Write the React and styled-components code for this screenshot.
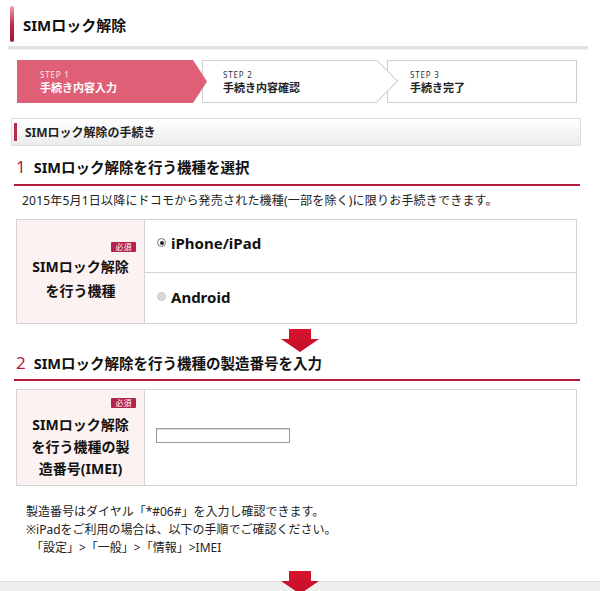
import React from "react";
import styled, { createGlobalStyle } from "styled-components";

const Global = createGlobalStyle`
  * { box-sizing: border-box; }
  html, body { margin: 0; padding: 0; background: #fff; }
  body {
    font-family: "Noto Sans", "Noto Sans CJK JP", sans-serif;
    color: #222;
  }
`;

const Page = styled.div`
  width: 600px;
  height: 591px;
  overflow: hidden;
  position: relative;
  background: #fff;
`;

const Header = styled.div`
  margin: 0 12px 0 8px;
  height: 49px;
  display: flex;
  align-items: flex-start;
  border-bottom: 3px solid #e2e2e2;
  box-shadow: 0 1px 0 #f2f2f2;
`;

const HeaderBar = styled.div`
  width: 4px;
  height: 36px;
  margin: 6px 0 0 2px;
  border-radius: 2px;
  background: linear-gradient(#e9a0ad, #c2214a 55%, #a3163a);
`;

const HeaderTitle = styled.h1`
  margin: 15px 0 0 9px;
  font-size: 15px;
  line-height: 20px;
  font-weight: 700;
  color: #111;
`;

const Steps = styled.div`
  display: flex;
  margin: 11px 23px 0 17px;
  height: 43px;
`;

const StepBase = styled.div`
  position: relative;
  height: 43px;
  display: flex;
  flex-direction: column;
  justify-content: center;
  padding-top: 1px;
`;

const StepActive = styled(StepBase)`
  width: 190px;
  flex: none;
  padding-left: 23px;
  background: #df5f76;
  color: #fff;
  z-index: 2;
  clip-path: polygon(0 0, calc(100% - 14px) 0, 100% 50%, calc(100% - 14px) 100%, 0 100%);
`;

const StepMid = styled(StepBase)`
  width: 175px;
  flex: none;
  margin-left: -5px;
  padding-left: 20px;
  border: 1px solid #cfcfcf;
  border-right: none;
  background: #fff;
  z-index: 1;
  &::after {
    content: "";
    position: absolute;
    right: -15px;
    top: 5px;
    width: 29px;
    height: 29px;
    background: #fff;
    border-top: 1px solid #cfcfcf;
    border-right: 1px solid #cfcfcf;
    transform: rotate(45deg);
  }
`;

const StepLast = styled(StepBase)`
  flex: 1;
  margin-left: 10px;
  padding-left: 22px;
  border: 1px solid #cfcfcf;
  background: #fff;
`;

const StepNum = styled.div`
  font-size: 8px;
  line-height: 10px;
  letter-spacing: 0.8px;
  color: ${(p) => (p.$active ? "#fde6ea" : "#333")};
`;

const StepName = styled.div`
  font-size: 11px;
  line-height: 15px;
  font-weight: 700;
  color: ${(p) => (p.$active ? "#fff" : "#222")};
`;

const SectionHead = styled.div`
  margin: 15px 19px 0 11px;
  height: 28px;
  border: 1px solid #dcdcdc;
  border-radius: 2px;
  background: linear-gradient(#ffffff, #ececec);
  display: flex;
  align-items: center;
`;

const SectionBar = styled.div`
  width: 3px;
  height: 18px;
  margin-left: 2px;
  background: #b72c48;
`;

const SectionTitle = styled.div`
  margin-left: 8px;
  font-size: 12px;
  font-weight: 700;
  color: #222;
`;

const StepHeading = styled.h2`
  margin: 0 20px 0 14px;
  padding: ${(p) => p.$pt}px 0 ${(p) => p.$pb}px 2px;
  border-bottom: 2px solid #b3193d;
  display: flex;
  align-items: baseline;
  font-size: 14.5px;
  line-height: 22px;
  font-weight: 700;
  color: #111;
`;

const HeadNum = styled.span`
  font-weight: 400;
  font-size: 17px;
  color: #b3193d;
  margin-right: 8px;
`;

const Desc = styled.p`
  margin: 6px 0 0 22px;
  font-size: 12px;
  line-height: 18px;
  letter-spacing: 0.2px;
  color: #222;
`;

const FormTable = styled.div`
  margin: ${(p) => p.$mt}px 23px 0 16px;
  display: grid;
  grid-template-columns: 128px 1fr;
  border: 1px solid #d4d4d4;
  height: ${(p) => p.$h}px;
`;

const LabelCell = styled.div`
  position: relative;
  background: #fcf2f2;
  border-right: 1px solid #d4d4d4;
  display: flex;
  flex-direction: column;
  align-items: center;
  justify-content: center;
  padding-top: ${(p) => p.$pt || 0}px;
`;

const Badge = styled.span`
  position: absolute;
  right: 8px;
  top: ${(p) => p.$top}px;
  width: 25px;
  height: 10px;
  line-height: 10px;
  font-size: 8px;
  text-align: center;
  color: #fff;
  background: #b3234c;
  border-radius: 1px;
`;

const LabelText = styled.div`
  font-size: 14px;
  line-height: ${(p) => p.$lh}px;
  font-weight: 700;
  text-align: center;
  color: #111;
`;

const Options = styled.div`
  display: grid;
  grid-template-rows: 1fr 1fr;
`;

const OptionRow = styled.label`
  display: flex;
  align-items: center;
  padding-left: 12px;
  padding-bottom: ${(p) => p.$pb || 0}px;
  border-top: ${(p) => (p.$first ? "none" : "1px solid #d4d4d4")};
  font-size: 15px;
  font-weight: 700;
  color: #111;
`;

const Radio = styled.span`
  width: 9px;
  height: 9px;
  border-radius: 50%;
  margin-right: 5px;
  border: 1px solid ${(p) => (p.$on ? "#777" : "#c8c8c8")};
  background: ${(p) => (p.$on ? "#fff" : "#d8d8d8")};
  display: flex;
  align-items: center;
  justify-content: center;
  &::after {
    content: "";
    width: 4px;
    height: 4px;
    border-radius: 50%;
    background: ${(p) => (p.$on ? "#222" : "transparent")};
  }
`;

const InputCell = styled.div`
  display: flex;
  align-items: center;
  padding: 0 0 4px 11px;
`;

const TextInput = styled.input`
  width: 134px;
  height: 15px;
  border: 1px solid #9a9a9a;
  box-shadow: inset 0 1px 1px #ddd;
  padding: 0 3px;
  font-size: 11px;
`;

const ArrowWrap = styled.div`
  display: flex;
  justify-content: center;
  margin-top: ${(p) => p.$mt}px;
  height: 23px;
`;

const Notes = styled.div`
  margin: 17px 0 0 26px;
  font-size: 12px;
  line-height: 18px;
  color: #222;
`;

const Indent = styled.div`
  padding-left: 5px;
`;

const Footer = styled.div`
  position: absolute;
  left: 0;
  right: 0;
  top: 581px;
  height: 10px;
  background: #efefef;
  border-top: 1px solid #e0e0e0;
`;

const FooterArrow = styled.div`
  position: absolute;
  left: 281px;
  top: 571px;
  z-index: 3;
`;

const DownArrow = () => (
  <svg width="38" height="23" viewBox="0 0 38 23">
    <defs>
      <linearGradient id="ag" x1="0" y1="0" x2="0" y2="1">
        <stop offset="0" stopColor="#d8142e" />
        <stop offset="1" stopColor="#c20e28" />
      </linearGradient>
    </defs>
    <polygon points="8,0 30,0 30,10 38,10 19,23 0,10 8,10" fill="url(#ag)" />
  </svg>
);

export default function App() {
  return (
    <Page>
      <Global />
      <Header>
        <HeaderBar />
        <HeaderTitle>SIMロック解除</HeaderTitle>
      </Header>

      <Steps>
        <StepActive>
          <StepNum $active>STEP 1</StepNum>
          <StepName $active>手続き内容入力</StepName>
        </StepActive>
        <StepMid>
          <StepNum>STEP 2</StepNum>
          <StepName>手続き内容確認</StepName>
        </StepMid>
        <StepLast>
          <StepNum>STEP 3</StepNum>
          <StepName>手続き完了</StepName>
        </StepLast>
      </Steps>

      <SectionHead>
        <SectionBar />
        <SectionTitle>SIMロック解除の手続き</SectionTitle>
      </SectionHead>

      <StepHeading $pt={10} $pb={6}>
        <HeadNum>1</HeadNum>SIMロック解除を行う機種を選択
      </StepHeading>
      <Desc>2015年5月1日以降にドコモから発売された機種(一部を除く)に限りお手続きできます。</Desc>

      <FormTable $mt={9} $h={105}>
        <LabelCell $pt={14}>
          <Badge $top={22}>必須</Badge>
          <LabelText $lh={24}>
            SIMロック解除
            <br />
            を行う機種
          </LabelText>
        </LabelCell>
        <Options>
          <OptionRow $first $pb={6}>
            <Radio $on />
            iPhone/iPad
          </OptionRow>
          <OptionRow $pb={2}>
            <Radio />
            Android
          </OptionRow>
        </Options>
      </FormTable>

      <ArrowWrap $mt={5}>
        <DownArrow />
      </ArrowWrap>

      <StepHeading $pt={0} $pb={5}>
        <HeadNum>2</HeadNum>SIMロック解除を行う機種の製造番号を入力
      </StepHeading>

      <FormTable $mt={8} $h={97}>
        <LabelCell $pt={18}>
          <Badge $top={8}>必須</Badge>
          <LabelText $lh={22}>
            SIMロック解除
            <br />
            を行う機種の製
            <br />
            造番号(IMEI)
          </LabelText>
        </LabelCell>
        <InputCell>
          <TextInput type="text" />
        </InputCell>
      </FormTable>

      <Notes>
        <div>製造番号はダイヤル「*#06#」を入力し確認できます。</div>
        <div>※iPadをご利用の場合は、以下の手順でご確認ください。</div>
        <Indent>「設定」&gt;「一般」&gt;「情報」&gt;IMEI</Indent>
      </Notes>

      <Footer />
      <FooterArrow>
        <DownArrow />
      </FooterArrow>
    </Page>
  );
}
